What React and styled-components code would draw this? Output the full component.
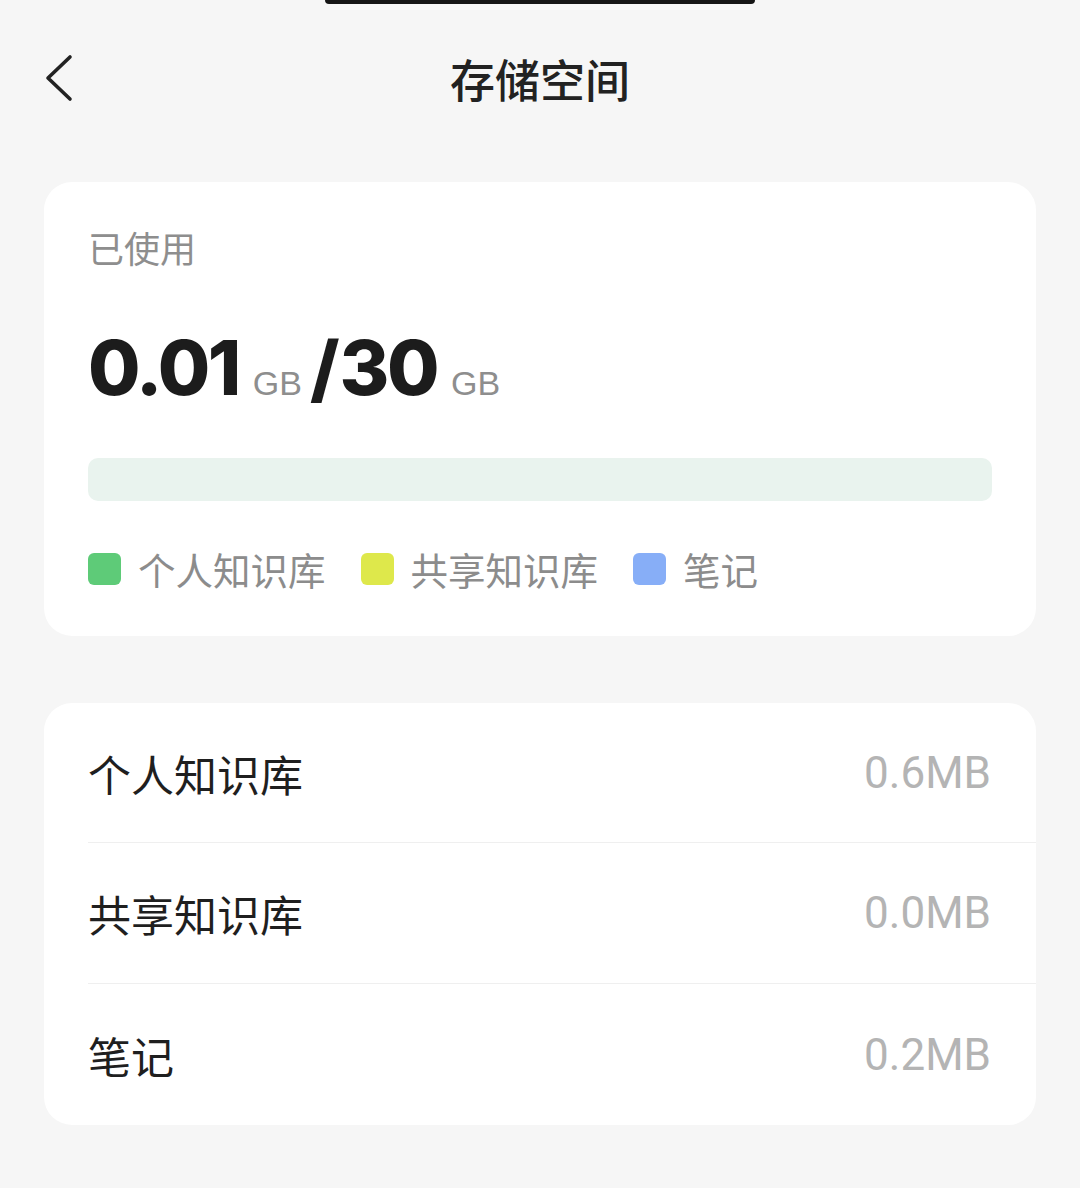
import React from 'react';
import styled, { createGlobalStyle } from 'styled-components';

const GlobalStyle = createGlobalStyle`
  html, body {
    margin: 0;
    padding: 0;
    background: #f6f6f6;
  }
  body {
    font-family: "Noto Sans CJK SC", "Noto Sans", sans-serif;
    -webkit-font-smoothing: antialiased;
  }
`;

const Page = styled.div`
  min-height: 1188px;
  padding: 0 44px;
  background: #f6f6f6;
`;

const Notch = styled.div`
  width: 430px;
  height: 4px;
  margin: 0 auto;
  background: #151515;
  border-radius: 0 0 8px 8px;
`;

const Header = styled.header`
  height: 148px;
  display: grid;
  grid-template-columns: 80px 1fr 80px;
  align-items: center;
`;

const BackButton = styled.button`
  border: none;
  background: none;
  padding: 0;
  width: 32px;
  height: 50px;
  display: flex;
  align-items: center;
  cursor: pointer;
`;

const Title = styled.h1`
  margin: 0;
  text-align: center;
  font-size: 45px;
  line-height: 1;
  font-weight: 500;
  color: #222;
`;

const Card = styled.section`
  background: #fff;
  border-radius: 28px;
  margin-top: ${(p) => p.$top}px;
`;

const UsageCard = styled(Card)`
  padding: 47px 44px 47px;
`;

const Caption = styled.div`
  font-size: 36px;
  line-height: 36px;
  color: #8e8e8e;
`;

const Amount = styled.div`
  margin-top: 64px;
  height: 76px;
  display: flex;
  align-items: baseline;
  line-height: 76px;
  color: #1c1c1c;
`;

const Big = styled.span`
  font-family: Inter, "Noto Sans", sans-serif;
  font-weight: 800;
  font-size: 76px;
  letter-spacing: -2.5px;
`;

const Slash = styled.span`
  font-family: Inter, "Noto Sans", sans-serif;
  font-weight: 800;
  font-size: 74px;
  margin: 0 0 0 8px;
`;

const Unit = styled.span`
  font-family: "Liberation Sans", Arial, sans-serif;
  font-size: 34px;
  color: #8e8e8e;
  margin-left: 14px;
`;

const Bar = styled.div`
  margin-top: 53px;
  height: 43px;
  border-radius: 10px;
  background: #e9f3ee;
  overflow: hidden;
  display: flex;
`;

const Fill = styled.div`
  height: 100%;
  background: ${(p) => p.$color};
`;

const Legend = styled.div`
  margin-top: 48px;
  height: 40px;
  display: flex;
  align-items: center;
  gap: 35px;
`;

const LegendItem = styled.div`
  display: flex;
  align-items: center;
  gap: 17px;
  font-size: 37.5px;
  line-height: 40px;
  color: #8c8c8c;
`;

const Swatch = styled.span`
  width: 33px;
  height: 32px;
  border-radius: 6px;
  background: ${(p) => p.$color};
`;

const Row = styled.div`
  height: ${(p) => p.$h}px;
  margin-left: 44px;
  padding-right: 45px;
  display: flex;
  align-items: center;
  justify-content: space-between;
  border-bottom: ${(p) => (p.$last ? 'none' : '1.5px solid #efefef')};
  box-sizing: border-box;
`;

const Label = styled.span`
  font-size: 43px;
  color: #1f1f1f;
`;

const Value = styled.span`
  font-family: Roboto, "Noto Sans", sans-serif;
  font-size: 44px;
  color: #b4b4b4;
`;

const legend = [
  { name: '个人知识库', color: '#5ecb78', size: 0.6 },
  { name: '共享知识库', color: '#dee84b', size: 0.0 },
  { name: '笔记', color: '#87aef7', size: 0.2 },
];

const TOTAL_MB = 30 * 1024;

const App = () => {
  return (
    <Page>
      <GlobalStyle />
      <Notch />
      <Header>
        <BackButton aria-label="返回">
          <svg width="30" height="48" viewBox="0 0 30 48" fill="none">
            <path d="M26 3 L4 24 L26 45" stroke="#222" strokeWidth="3.6" strokeLinecap="round" strokeLinejoin="round" />
          </svg>
        </BackButton>
        <Title>存储空间</Title>
        <span />
      </Header>

      <UsageCard $top={30}>
        <Caption>已使用</Caption>
        <Amount>
          <Big>0.01</Big>
          <Unit>GB</Unit>
          <Slash>/</Slash>
          <Big>30</Big>
          <Unit>GB</Unit>
        </Amount>
        <Bar>
          {legend.map((l) => (
            <Fill key={l.name} $color={l.color} style={{ width: `${(l.size / TOTAL_MB) * 100}%` }} />
          ))}
        </Bar>
        <Legend>
          {legend.map((l) => (
            <LegendItem key={l.name}>
              <Swatch $color={l.color} />
              {l.name}
            </LegendItem>
          ))}
        </Legend>
      </UsageCard>

      <Card $top={67}>
        {legend.map((l, i) => (
          <Row key={l.name} $h={i === 0 ? 140 : 141} $last={i === legend.length - 1}>
            <Label>{l.name}</Label>
            <Value>{l.size.toFixed(1)}MB</Value>
          </Row>
        ))}
      </Card>
    </Page>
  );
};

export default App;
